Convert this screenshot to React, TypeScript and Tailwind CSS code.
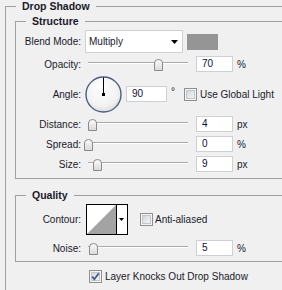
import React from 'react';

const Checkbox = ({ checked = false }: { checked?: boolean }) => (
  <svg width="13" height="13" viewBox="0 0 13 13" className="shrink-0">
    <defs>
      <linearGradient id={checked ? 'cbOn' : 'cbOff'} x1="0" y1="0" x2="1" y2="1">
        <stop offset="0" stopColor="#d2d4d8" />
        <stop offset="1" stopColor="#f7f7f7" />
      </linearGradient>
    </defs>
    <rect x="0.5" y="0.5" width="12" height="12" fill="#f4f4f4" stroke="#8e8f8f" />
    <rect x="2.5" y="2.5" width="8" height="8" fill={`url(#${checked ? 'cbOn' : 'cbOff'})`} stroke="#c3c6ca" />
    {checked && (
      <path d="M3.2 6.6 L5.4 9.2 L9.8 3.2" fill="none" stroke="#3d5490" strokeWidth="1.7" />
    )}
  </svg>
);

const Slider = ({ value }: { value: number }) => (
  <div className="relative ml-[3px] h-[16px] w-[108px] shrink-0">
    <div className="absolute left-[4px] right-[4px] top-[6px] h-[2px] border-t border-[#a9a9a9] bg-white" />
    <svg className="absolute top-[3px]" style={{ left: value }} width="9" height="12" viewBox="0 0 9 12">
      <defs>
        <linearGradient id="thumb" x1="0" y1="0" x2="0" y2="1">
          <stop offset="0" stopColor="#fbfbfb" />
          <stop offset="1" stopColor="#d9d9d9" />
        </linearGradient>
      </defs>
      <path d="M0.5 11.5 V4 Q0.5 0.5 4.5 0.5 Q8.5 0.5 8.5 4 V11.5 Z" fill="url(#thumb)" stroke="#8a8a8a" />
    </svg>
  </div>
);

const NumBox = ({ value, w = 'w-[37px]' }: { value: string; w?: string }) => (
  <div className={`ml-[4px] h-[16px] ${w} shrink-0 border border-[#cdd0d4] bg-white pl-[5px] leading-[14px] text-[#10103a]`}>
    {value}
  </div>
);

const Label = ({ children }: { children: React.ReactNode }) => (
  <div className="w-[65px] shrink-0 text-right">{children}</div>
);

const SliderRow = ({ label, value, pos, unit }: { label: string; value: string; pos: number; unit: string }) => (
  <div className="mt-[4px] flex h-[16px] items-center">
    <Label>{label}</Label>
    <Slider value={pos} />
    <NumBox value={value} />
    <span className="ml-[4px]">{unit}</span>
  </div>
);

export default function App() {
  return (
    <div className="h-[290px] w-[282px] overflow-hidden bg-[#f0f0f0] font-['Liberation_Sans',sans-serif] text-[10px] text-[#1a1a2a]">
      <fieldset className="ml-[5px] h-[320px] w-[300px] border-l border-t border-[#a0a0a0]">
        <legend className="ml-[10px] px-[6px] text-[10.5px] font-bold leading-[13px]">Drop Shadow</legend>

        <fieldset className="ml-[9px] mt-[2px] w-[290px] border-b border-l border-t border-[#a0a0a0] pb-[6px]">
          <legend className="ml-[10px] px-[6px] text-[10.5px] font-bold leading-[13px]">Structure</legend>

          <div className="mt-[2px] flex h-[23px] items-center">
            <Label>Blend Mode:</Label>
            <div className="ml-[4px] flex h-[23px] w-[98px] shrink-0 items-center justify-between border border-[#cdd0d4] bg-white pl-[3px] pr-[4px]">
              <span>Multiply</span>
              <svg width="7" height="4" viewBox="0 0 7 4">
                <path d="M0 0 H7 L3.5 4 Z" fill="#000" />
              </svg>
            </div>
            <div className="ml-[4px] h-[16px] w-[31px] shrink-0 bg-[#959595]" />
          </div>

          <div className="mt-[3px] flex h-[16px] items-center">
            <Label>Opacity:</Label>
            <Slider value={70} />
            <NumBox value="70" />
            <span className="ml-[4px]">%</span>
          </div>

          <div className="mt-[4px] flex h-[36px] items-center">
            <Label>Angle:</Label>
            <svg className="ml-[4px] shrink-0" width="37" height="37" viewBox="0 0 37 37">
              <defs>
                <radialGradient id="dial" cx="0.45" cy="0.35" r="0.7">
                  <stop offset="0" stopColor="#ffffff" />
                  <stop offset="0.7" stopColor="#f1f1f1" />
                  <stop offset="1" stopColor="#d6d6d6" />
                </radialGradient>
              </defs>
              <circle cx="18.5" cy="18.5" r="17.5" fill="url(#dial)" stroke="#4d5d86" strokeWidth="1.4" />
              <line x1="18.5" y1="18.5" x2="18.5" y2="1.5" stroke="#000" strokeWidth="1" />
              <rect x="17" y="17" width="3" height="3" fill="#000" />
            </svg>
            <NumBox value="90" w="w-[41px]" />
            <span className="ml-[4px] mb-[6px] w-[13px] shrink-0">°</span>
            <Checkbox />
            <span className="ml-[3px]">Use Global Light</span>
          </div>

          <SliderRow label="Distance:" value="4" pos={4} unit="px" />
          <SliderRow label="Spread:" value="0" pos={0} unit="%" />
          <SliderRow label="Size:" value="9" pos={9} unit="px" />
        </fieldset>

        <fieldset className="ml-[9px] mt-[10px] w-[290px] border-b border-l border-t border-[#a0a0a0] pb-[5px]">
          <legend className="ml-[10px] px-[6px] text-[10.5px] font-bold leading-[13px]">Quality</legend>

          <div className="mt-[2px] flex h-[31px] items-center">
            <Label>Contour:</Label>
            <div className="ml-[5px] flex h-[31px] w-[42px] shrink-0 border border-black bg-white">
              <svg width="29" height="29" viewBox="0 0 29 29" className="shrink-0">
                <polygon points="0,29 29,0 29,29" fill="#a3a3a3" />
              </svg>
              <div className="flex w-[10px] items-center justify-center border-l border-black">
                <svg width="5" height="3" viewBox="0 0 5 3">
                  <path d="M0 0 H5 L2.5 3 Z" fill="#000" />
                </svg>
              </div>
            </div>
            <div className="ml-[12px] flex items-center">
              <Checkbox />
              <span className="ml-[2px]">Anti-aliased</span>
            </div>
          </div>

          <div className="mt-[5px] flex h-[16px] items-center">
            <Label>Noise:</Label>
            <Slider value={5} />
            <NumBox value="5" />
            <span className="ml-[4px]">%</span>
          </div>
        </fieldset>

        <div className="ml-[83px] mt-[8px] flex h-[13px] items-center">
          <Checkbox checked />
          <span className="ml-[3px]">Layer Knocks Out Drop Shadow</span>
        </div>
      </fieldset>
    </div>
  );
}
